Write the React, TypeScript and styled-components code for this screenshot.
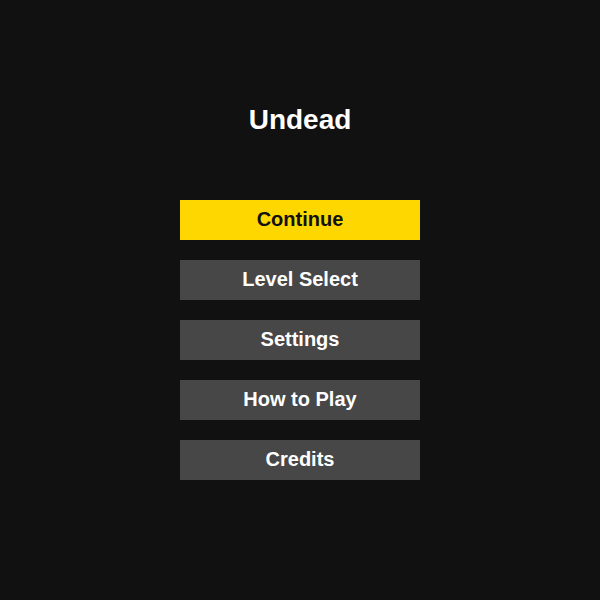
import styled, { createGlobalStyle } from 'styled-components';

const GlobalStyle = createGlobalStyle`
  html, body {
    margin: 0;
    padding: 0;
    background: #111111;
  }
  body {
    font-family: 'Liberation Sans', Arial, sans-serif;
  }
`;

const Screen = styled.div`
  display: flex;
  flex-direction: column;
  align-items: center;
  width: 600px;
  height: 600px;
  padding-top: 104px;
  box-sizing: border-box;
  background: #111111;
`;

const Title = styled.h1`
  margin: 0 0 64px;
  font-size: 28px;
  line-height: 32px;
  font-weight: 700;
  color: #ffffff;
`;

const Menu = styled.div`
  display: flex;
  flex-direction: column;
  gap: 20px;
`;

const MenuButton = styled.button<{ $active?: boolean }>`
  width: 240px;
  height: 40px;
  padding: 0 0 2px;
  border: none;
  font-family: 'Liberation Sans', Arial, sans-serif;
  font-size: 20px;
  font-weight: 700;
  cursor: pointer;
  background: ${(p) => (p.$active ? '#ffd700' : '#474747')};
  color: ${(p) => (p.$active ? '#111111' : '#ffffff')};
`;

const items = ['Continue', 'Level Select', 'Settings', 'How to Play', 'Credits'];

export default function App() {
  return (
    <>
      <GlobalStyle />
      <Screen>
        <Title>Undead</Title>
        <Menu>
          {items.map((label, i) => (
            <MenuButton key={label} $active={i === 0}>
              {label}
            </MenuButton>
          ))}
        </Menu>
      </Screen>
    </>
  );
}
